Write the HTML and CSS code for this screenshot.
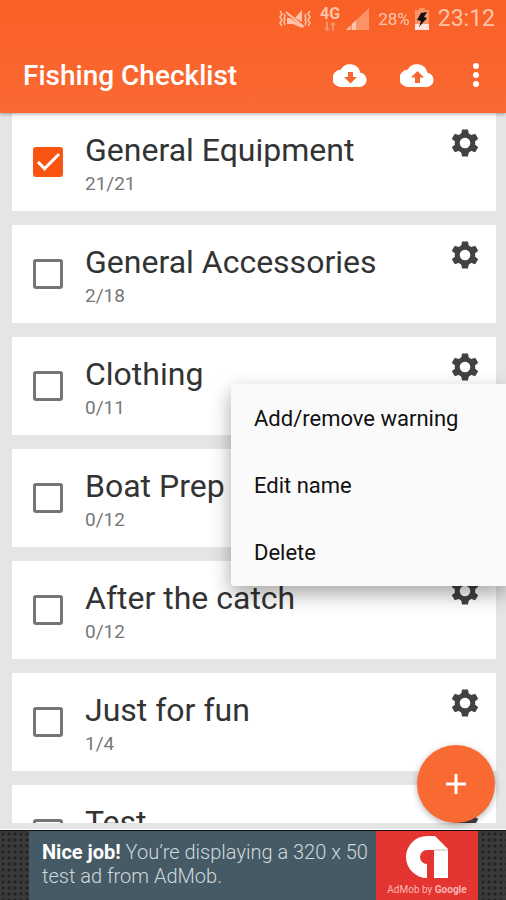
FILE: index.html
```html
<!DOCTYPE html>
<html lang="en">
<head>
    <meta charset="UTF-8">
    <meta name="viewport" content="width=device-width, initial-scale=1.0">
    <title>Fishing Checklist</title>
    <link rel="stylesheet" href="styles.css">
</head>
<body>
    <!-- shared gear icon -->
    <svg class="defs" width="0" height="0" aria-hidden="true">
        <symbol id="gear" viewBox="0 0 28 28">
            <circle cx="14" cy="14" r="7.8" fill="none" stroke="currentColor" stroke-width="5"/>
            <g fill="currentColor">
                <path id="tooth" d="M11 .5h6l1 5.500H10z"/>
                <use href="#tooth" transform="rotate(60 14 14)"/>
                <use href="#tooth" transform="rotate(120 14 14)"/>
                <use href="#tooth" transform="rotate(180 14 14)"/>
                <use href="#tooth" transform="rotate(240 14 14)"/>
                <use href="#tooth" transform="rotate(300 14 14)"/>
            </g>
        </symbol>
    </svg>

    <header class="header">
        <div class="status-bar">
            <svg class="mute" viewBox="0 0 34 22" width="34" height="22" fill="none" stroke="currentColor" stroke-width="1.5">
                <path d="M2 3l2 3-2 3 2 3-2 3 2 3M6 6l1 2-1 2 1 2-1 2 1 3M32 3l-2 3 2 3-2 3 2 3-2 3M28 6l-1 2 1 2-1 2 1 2-1 3"/>
                <path d="M14 8l3 2 7-8v12zM9 10v6h6l9 4v-2L12 10z" fill="currentColor" stroke="none"/>
                <path d="M8 4l18 15" stroke-width="2"/>
            </svg>
            <div class="network">
                <span>4G</span>
                <svg viewBox="0 0 12 9" width="12" height="9" fill="none" stroke="currentColor" stroke-width="2">
                    <path d="M3 0v8M1 6l2 2 2-2M9 9V1M7 3l2-2 2 2"/>
                </svg>
            </div>
            <svg class="signal" viewBox="0 0 24 22" width="24" height="22" fill="currentColor">
                <path d="M0 22L23 0v22z" opacity=".5"/>
                <path d="M0 22l4-4v4zM6 22v-6l4-4v10z"/>
            </svg>
            <span class="percent">28%</span>
            <svg class="battery" viewBox="0 0 14 22" width="14" height="22">
                <path d="M4 0h6v2h4v20H0V2h4z" fill="currentColor" opacity=".5"/>
                <path d="M0 16h14v6H0z" fill="#ffe5db"/>
                <path d="M6 5l6-1-3 5 3 1-8 9 2-6-4-1z" fill="#111"/>
            </svg>
            <span class="clock">23:12</span>
        </div>
        <div class="toolbar">
            <h1>Fishing Checklist</h1>
            <button class="icon-btn" aria-label="Download">
                <svg viewBox="0 0 34 23" width="34" height="23">
                    <path d="M27.4 8.7A10.7 10.7 0 0 0 7.5 5.8 8.6 8.6 0 0 0 8.5 23H27a7.2 7.2 0 0 0 .4-14.3z" fill="#fff"/>
                    <path d="M15 8h5v5h4l-6.500 6.500L11 13h4z" fill="#f96530"/>
                </svg>
            </button>
            <button class="icon-btn" aria-label="Upload">
                <svg viewBox="0 0 34 23" width="34" height="23">
                    <path d="M27.4 8.7A10.7 10.7 0 0 0 7.5 5.8 8.6 8.6 0 0 0 8.500 23H27a7.2 7.2 0 0 0 .4-14.3z" fill="#fff"/>
                    <path d="M15 19h5v-5.500h4L17.500 7 11 13.500h4z" fill="#f96530"/>
                </svg>
            </button>
            <button class="icon-btn more" aria-label="More options">
                <svg viewBox="0 0 6 24" width="6" height="24" fill="#fff">
                    <circle cx="3" cy="3" r="3"/><circle cx="3" cy="12" r="3"/><circle cx="3" cy="21" r="3"/>
                </svg>
            </button>
        </div>
    </header>

    <main class="content">
        <ul class="list">
            <li class="card">
                <input type="checkbox" id="c1" checked>
                <label for="c1"><span class="name">General Equipment</span><span class="count">21/21</span></label>
                <button class="gear-btn" aria-label="Settings"><svg width="28" height="28"><use href="#gear"/></svg></button>
            </li>
            <li class="card">
                <input type="checkbox" id="c2">
                <label for="c2"><span class="name">General Accessories</span><span class="count">2/18</span></label>
                <button class="gear-btn" aria-label="Settings"><svg width="28" height="28"><use href="#gear"/></svg></button>
            </li>
            <li class="card">
                <input type="checkbox" id="c3">
                <label for="c3"><span class="name">Clothing</span><span class="count">0/11</span></label>
                <button class="gear-btn" aria-label="Settings"><svg width="28" height="28"><use href="#gear"/></svg></button>
                <div class="menu">
                    <button>Add/remove warning</button>
                    <button>Edit name</button>
                    <button>Delete</button>
                </div>
            </li>
            <li class="card">
                <input type="checkbox" id="c4">
                <label for="c4"><span class="name">Boat Prep</span><span class="count">0/12</span></label>
                <button class="gear-btn" aria-label="Settings"><svg width="28" height="28"><use href="#gear"/></svg></button>
            </li>
            <li class="card">
                <input type="checkbox" id="c5">
                <label for="c5"><span class="name">After the catch</span><span class="count">0/12</span></label>
                <button class="gear-btn" aria-label="Settings"><svg width="28" height="28"><use href="#gear"/></svg></button>
            </li>
            <li class="card">
                <input type="checkbox" id="c6">
                <label for="c6"><span class="name">Just for fun</span><span class="count">1/4</span></label>
                <button class="gear-btn" aria-label="Settings"><svg width="28" height="28"><use href="#gear"/></svg></button>
            </li>
            <li class="card">
                <input type="checkbox" id="c7">
                <label for="c7"><span class="name">Test</span></label>
                <button class="gear-btn" aria-label="Settings"><svg width="28" height="28"><use href="#gear"/></svg></button>
            </li>
        </ul>
        <button class="fab" aria-label="Add list">
            <svg viewBox="0 0 20 20" width="20" height="20" stroke="#fff" stroke-width="3"><path d="M10 0v20M0 10h20"/></svg>
        </button>
    </main>

    <footer class="ad">
        <p class="ad-text"><b>Nice job!</b> You’re displaying a 320 x 50 test ad from AdMob.</p>
        <div class="admob">
            <svg viewBox="0 0 42 42" width="42" height="42">
                <path d="M21 0h8l13 13v29H28V14h-7a7 7 0 0 0 0 14v14A21 21 0 0 1 21 0z" fill="#fff"/>
                <path d="M28 13h14v2H28z" fill="#e8d8d6"/>
            </svg>
            <span>AdMob by <b>Google</b></span>
        </div>
    </footer>
</body>
</html>
```
FILE: styles.css
```css
* { box-sizing: border-box; }
body { margin: 0; height: 100vh; display: flex; flex-direction: column; overflow: hidden; background: #e5e5e5; font-family: Roboto, sans-serif; color: #333; }
button { border: none; background: none; padding: 0; font-family: inherit; color: inherit; cursor: pointer; }
svg { display: block; }
.defs { position: absolute; }

/* Header */
.header { background: linear-gradient(#f96025, #fa6933); color: #fff; position: relative; z-index: 1; box-shadow: 0 1px 4px rgba(0, 0, 0, 0.35); }
.status-bar { height: 37px; padding: 0 11px; display: flex; justify-content: flex-end; align-items: center; color: #ffc3aa; }
.network { margin: 0 6px 0 8px; display: flex; flex-direction: column; align-items: center; font-size: 16px; line-height: 16px; font-weight: bold; }
.network svg { opacity: 0.5; }
.percent { margin: 0 5px 0 8px; font-size: 17px; }
.clock { margin-left: 9px; font-size: 23px; }
.toolbar { height: 76px; padding: 0 27px 0 23px; display: flex; align-items: center; }
.toolbar h1 { flex: 1; margin: 0; font-size: 28px; font-weight: 500; }
.icon-btn { margin-left: 33px; }
.more { margin-left: 39px; }

/* List */
.content { flex: 1; min-height: 0; position: relative; padding-bottom: 6px; border-bottom: 1px solid #fff; }
.list { height: 100%; margin: 0; padding: 0 10px 0 12px; list-style: none; overflow: hidden; display: flex; flex-direction: column; gap: 14px; }
.card { position: relative; flex: none; height: 98px; padding: 16px 17px 0 21px; background: #fff; display: flex; align-items: flex-start; }
.card input { appearance: none; flex: none; width: 30px; height: 30px; margin: 18px 22px 0 0; border: 3px solid #757575; border-radius: 3px; }
.card input:checked { border: none; background: #fb5310; }
.card input:checked::after { content: ""; display: block; width: 8px; height: 19px; margin: 1px 0 0 10px; border: solid #fff; border-width: 0 3px 3px 0; transform: rotate(45deg); }
.card label { flex: 1; display: flex; flex-direction: column; }
.name { font-size: 32px; line-height: 42px; }
.count { font-size: 19px; line-height: 26px; color: #777; }
.gear-btn { color: #424242; }

/* Popup menu */
.menu { position: absolute; z-index: 1; top: 47px; right: -10px; width: 275px; padding-top: 1px; background: #fafafa; border-radius: 3px 0 0 3px; box-shadow: 0 8px 20px rgba(0, 0, 0, 0.35); }
.menu button { display: block; width: 100%; height: 67px; padding: 0 23px; text-align: left; font-size: 22px; color: #111; }

.fab { position: absolute; right: 11px; bottom: 6px; width: 78px; height: 78px; border-radius: 50%; background: #f96a33; display: flex; justify-content: center; align-items: center; box-shadow: 0 2px 6px rgba(0, 0, 0, 0.3); }

/* Ad banner */
.ad { height: 70px; padding: 0 28px 0 29px; display: flex; border-top: 1px solid #111; background: radial-gradient(circle, #222 1px, transparent 2px) 0 0 / 6px 6px, #3a3a3a; }
.ad-text { flex: 1; margin: 0; padding: 9px 0 0 13px; background: #455a64; color: #cfd8dc; font-size: 20px; line-height: 24px; font-weight: 300; }
.ad-text b { color: #fff; font-weight: 700; }
.admob { width: 102px; padding-top: 5px; background: #e53531; color: #f7b5b2; display: flex; flex-direction: column; align-items: center; gap: 5px; font-size: 10px; line-height: 14px; }
```
